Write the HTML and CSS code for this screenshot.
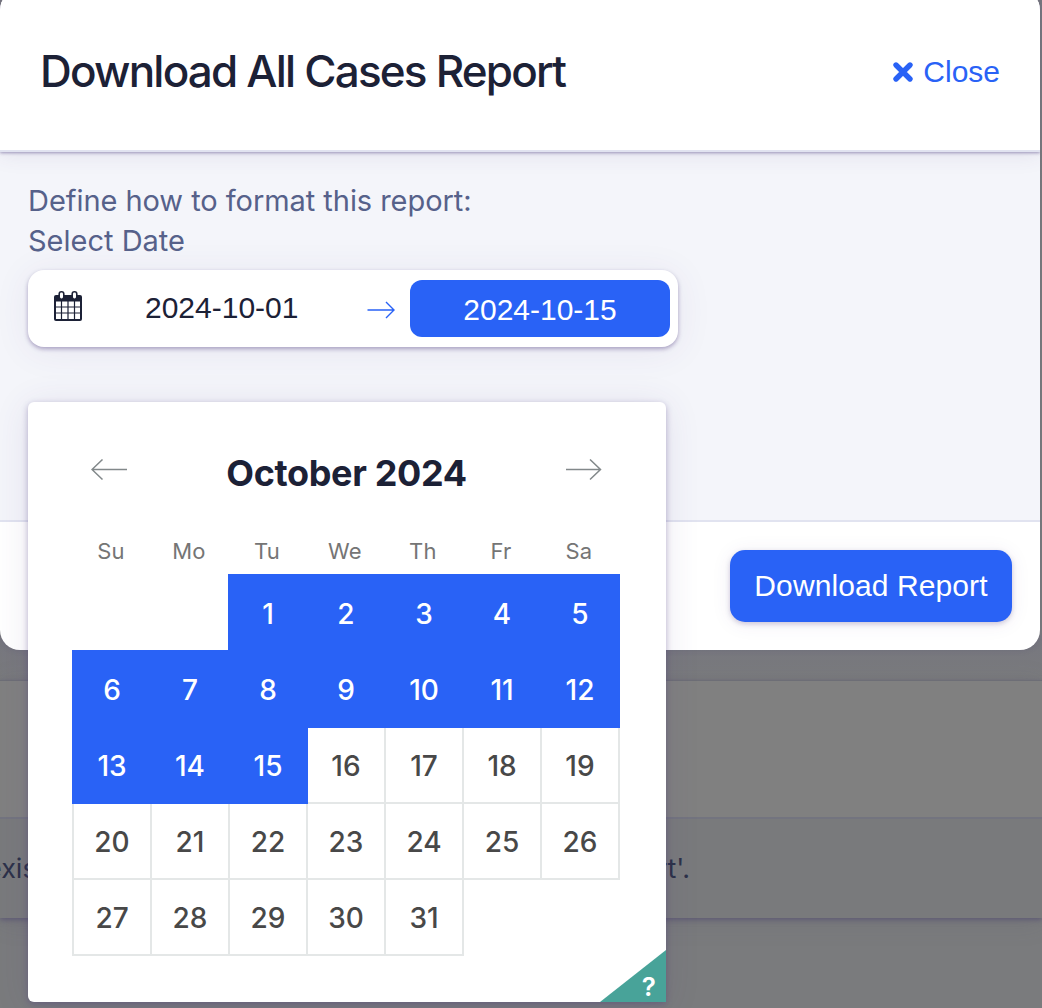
FILE: index.html
```
<!DOCTYPE html>
<html lang="en">
<head>
<meta charset="utf-8">
<title>Download All Cases Report</title>
<link rel="stylesheet" href="styles.css">
</head>
<body>
<div class="page">
  <div class="page-top"></div>
  <div class="panel">
    <div class="panel-head"></div>
    <div class="panel-note"><span class="note-start">exis</span><span class="note-end">rt'.</span></div>
  </div>
</div>

<section class="modal">
  <header class="modal-head">
    <h1 class="title">Download All Cases Report</h1>
    <a class="close">
      <svg width="22" height="22" viewBox="0 0 22 22"><path d="M4 4L18 18M18 4L4 18" fill="none" stroke="currentColor" stroke-width="5.400" stroke-linecap="round"/></svg>
      <span class="close-text">Close</span>
    </a>
  </header>
  <div class="modal-body">
    <p class="label label-define">Define how to format this report:</p>
    <p class="label label-date">Select Date</p>
    <div class="range">
      <svg class="cal" width="28" height="32" viewBox="0 0 28 32">
        <path d="M2 5H26Q28 5 28 7V29Q28 31 26 31H2Q0 31 0 29V7Q0 5 2 5Z" fill="#1c2136"/>
        <path d="M2 11.500H26V29H2Z" fill="#fff"/>
        <path d="M7.500 11V29M14 11V29M20.500 11V29M2 17H26M2 23H26" stroke="#1c2136" stroke-width="1.200"/>
        <rect x="5.200" y="1.800" width="4.600" height="7.500" rx="2.200" fill="#fff" stroke="#1c2136" stroke-width="1.600"/>
        <rect x="18.200" y="1.800" width="4.600" height="7.500" rx="2.200" fill="#fff" stroke="#1c2136" stroke-width="1.600"/>
      </svg>
      <span class="date">2024-10-01</span>
      <svg class="range-arrow" width="28" height="18" viewBox="0 0 28 18"><path d="M.5 9H27M19 1L27 9L19 17" fill="none" stroke="#2962f6" stroke-width="1.400"/></svg>
      <span class="date date-active">2024-10-15</span>
    </div>
  </div>
  <footer class="modal-foot"><button class="download">Download Report</button></footer>
</section>

<section class="picker">
  <div class="month-row">
    <svg width="36" height="22" viewBox="0 0 36 22"><path d="M36 10.500H1M11.500 .5L1 10.500L11.500 20.500" fill="none" stroke="#82888a" stroke-width="1.500"/></svg>
    <h2 class="month">October 2024</h2>
    <svg width="36" height="22" viewBox="0 0 36 22"><path d="M0 10.500H34.500M24 .5L34.500 10.500L24 20.500" fill="none" stroke="#82888a" stroke-width="1.500"/></svg>
  </div>
  <div class="week"><span>Su</span><span>Mo</span><span>Tu</span><span>We</span><span>Th</span><span>Fr</span><span>Sa</span></div>
  <div class="days">
    <span class="day first on">1</span><span class="day on">2</span><span class="day on">3</span><span class="day on">4</span><span class="day on">5</span>
    <span class="day on">6</span><span class="day on">7</span><span class="day on">8</span><span class="day on">9</span><span class="day on">10</span><span class="day on">11</span><span class="day on">12</span>
    <span class="day on">13</span><span class="day on">14</span><span class="day on">15</span><span class="day">16</span><span class="day">17</span><span class="day">18</span><span class="day">19</span>
    <span class="day">20</span><span class="day">21</span><span class="day">22</span><span class="day">23</span><span class="day">24</span><span class="day">25</span><span class="day">26</span>
    <span class="day">27</span><span class="day">28</span><span class="day">29</span><span class="day">30</span><span class="day">31</span>
  </div>
  <div class="help"><span>?</span></div>
</section>
</body>
</html>
```
FILE: styles.css
```
* { box-sizing: border-box; }
body {
  margin: 0;
  height: 1008px;
  overflow: hidden;
  position: relative;
  font-family: Inter, "Liberation Sans", sans-serif;
  background: #7b7b7d;
}
h1, h2, p { margin: 0; }
svg { display: block; flex: none; }

/* dimmed page underneath the dialog */
.page { height: 1008px; background: #7a7b7d; }
.page-top { height: 680px; background: linear-gradient(#77777f, #7a7b7d 30%, #7a7b7d 93%, #77777f 94%, #7a7b7d); }
.panel { border-top: 1px solid #6d6e76; box-shadow: 0 2px 5px #5f5b74, 0 4px 24px rgba(90, 85, 110, .15); }
.panel-head { height: 136px; background: #808080; }
.panel-note {
  height: 101px;
  border-top: 2px solid #73747f;
  background: #797a7c;
  display: flex;
  justify-content: space-between;
  padding: 33px 352px 0 0;
  font-size: 27px;
  line-height: 34px;
  color: #2c3149;
}
.note-start { margin-left: -14px; }

.modal {
  position: absolute;
  top: -10px;
  left: 0;
  width: 1040px;
  height: 660px;
  border-radius: 20px;
  background: #fff;
  overflow: hidden;
  box-shadow: 0 0 6px rgba(60, 50, 100, .15);
}
.modal-head {
  position: relative;
  height: 162px;
  padding: 10px 40px 0 40px;
  display: flex;
  justify-content: space-between;
  border-bottom: 2px solid #e1e3f0;
  background: #fff;
  box-shadow: 0 1px 3px rgba(75, 60, 125, .5), 0 3px 20px rgba(75, 60, 125, .1);
}
.title {
  margin-top: 43px;
  font-size: 44px;
  line-height: 56px;
  font-weight: 540;
  letter-spacing: -1.8px;
  color: #1c2136;
  white-space: nowrap;
}
.close {
  height: 40px;
  margin-top: 52px;
  display: flex;
  align-items: center;
  gap: 9px;
  color: #2962f6;
  font: 30px/40px "Liberation Sans", sans-serif;
}
.modal-body { height: 368px; padding: 29px 28px 28px; background: #f4f5fa; }
.label { font-size: 29px; line-height: 40px; font-weight: 430; color: #56618a; white-space: nowrap; }
.label-define { letter-spacing: -.05px; }
.range {
  width: 650px;
  height: 77px;
  margin-top: 9px;
  padding: 10px 8px 10px 26px;
  display: flex;
  align-items: center;
  border-radius: 16px;
  background: #fff;
  box-shadow: 0 2px 4px rgba(75, 55, 125, .42), 0 4px 36px rgba(75, 55, 125, .08);
}
.cal { margin-top: -5px; }
.date { font: 30px/40px "Liberation Sans", sans-serif; color: #1c2136; width: 154px; margin-left: 63px; }
.range .date:not(.date-active) { margin-top: -2px; }
.range-arrow { margin: 2px 15px 0 auto; }
.range .date-active {
  width: 260px;
  height: 57px;
  margin-left: 0;
  border-radius: 12px;
  background: #2962f6;
  color: #fff;
  line-height: 60px;
  text-align: center;
}
.modal-foot {
  height: 130px;
  padding: 28px;
  display: flex;
  justify-content: flex-end;
  border-top: 2px solid #e1e3f0;
}
.download {
  width: 282px;
  height: 72px;
  padding: 0;
  border: 0;
  border-radius: 15px;
  background: #2962f6;
  color: #fff;
  font: 30px/72px "Liberation Sans", sans-serif;
  letter-spacing: .1px;
  white-space: nowrap;
  box-shadow: 0 2px 5px rgba(75, 55, 125, .25), 0 2px 20px rgba(75, 55, 125, .08);
}

.picker {
  position: absolute;
  top: 402px;
  left: 28px;
  width: 638px;
  height: 600px;
  padding: 45px 44px 0;
  border-radius: 6px 6px 0 6px;
  background: #fff;
  box-shadow: 0 2px 6px rgba(75, 55, 125, .35), 0 4px 36px rgba(75, 55, 125, .11);
}
.month-row { height: 52px; margin: 0 20px 0 19px; display: flex; justify-content: space-between; }
.month-row svg { margin-top: 12px; }
.month { font-size: 36px; line-height: 52px; font-weight: 700; letter-spacing: -.35px; color: #1c2136; white-space: nowrap; }
.week {
  height: 46px;
  margin-top: 29px;
  display: grid;
  grid-template-columns: repeat(7, 78px);
  text-align: center;
  font-size: 22px;
  line-height: 46px;
  letter-spacing: .3px;
  color: #757575;
}
.days { display: grid; grid-template-columns: repeat(7, 78px); grid-auto-rows: 76px; }
.day {
  width: 80px;
  height: 78px;
  border: 2px solid #e4e7e7;
  line-height: 76px;
  text-align: center;
  font-size: 28px;
  font-weight: 450;
  color: #484848;
}
.first { grid-column-start: 3; }
.on { position: relative; border-color: #2962f6; background: #2962f6; color: #fff; font-weight: 500; }
.help {
  position: absolute;
  right: 0;
  bottom: 0;
  width: 66px;
  height: 52px;
  padding: 20px 10px 0 0;
  background: #48a399;
  clip-path: polygon(100% 0, 100% 100%, 0 100%);
  color: #fff;
  font-size: 26px;
  line-height: 34px;
  font-weight: 600;
  text-align: right;
}
```
